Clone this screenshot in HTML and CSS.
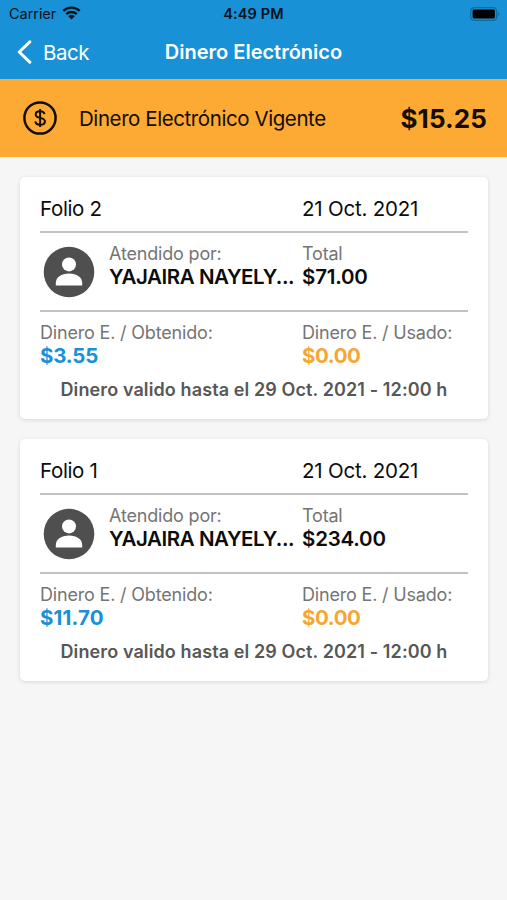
FILE: index.html
```html
<!DOCTYPE html>
<html lang="es">
<head>
<meta charset="utf-8">
<meta name="viewport" content="width=device-width, initial-scale=1">
<title>Dinero Electrónico</title>
<link rel="stylesheet" href="styles.css">
</head>
<body>
<header class="header">
  <div class="status">
    <div class="status-left">
      <span class="carrier">Carrier</span>
      <svg class="wifi" viewBox="0 0 18 13" width="19" height="13.700"><path d="M1.200 4.700a11.200 11.200 0 0 1 15.600 0M4 7.700a7.200 7.200 0 0 1 10 0" fill="none" stroke="#06121a" stroke-width="2.200"/><path d="M9 12.800 5.900 9.700a4.400 4.400 0 0 1 6.200 0z" fill="#06121a"/></svg>
    </div>
    <span class="time">4:49 PM</span>
    <svg class="battery" viewBox="0 0 30 14" width="30" height="14"><rect x=".7" y=".7" width="26" height="12.600" rx="3.600" fill="none" stroke="#126a9b" stroke-width="1.300"/><rect x="2.600" y="2.600" width="22.300" height="8.800" rx="1.400" fill="#000"/><path d="M28.200 5v4.200c1.600-.6 1.600-3.600 0-4.200z" fill="#126a9b"/></svg>
  </div>
  <nav class="nav">
    <a class="back">
      <svg viewBox="0 0 16 24" width="16" height="24"><path d="M13.800 1.800 3.200 12l10.600 10.200" fill="none" stroke="#fff" stroke-width="3" stroke-linecap="round" stroke-linejoin="round"/></svg>
      <span>Back</span>
    </a>
    <h1 class="title">Dinero Electrónico</h1>
  </nav>
</header>
<section class="balance">
  <svg class="coin" viewBox="0 0 34 34" width="34" height="34"><circle cx="17" cy="17" r="15.600" fill="none" stroke="#150d02" stroke-width="2.500"/><path d="M21.500 13.200c-.3-1.800-2-3-4.400-3-2.600 0-4.400 1.300-4.400 3.200 0 4.800 9.200 2.200 9.200 7 0 2-1.900 3.300-4.700 3.300-2.700 0-4.700-1.300-4.900-3.300M17.100 8v18" fill="none" stroke="#150d02" stroke-width="2"/></svg>
  <span class="balance-label">Dinero Electrónico Vigente</span>
  <strong class="balance-amount">$15.25</strong>
</section>
<main class="list">
  <article class="card">
    <div class="row row-head"><span class="folio">Folio 2</span><span class="date">21 Oct. 2021</span></div>
    <div class="row row-person">
      <div class="person">
        <svg class="avatar" viewBox="0 0 52 52" width="52" height="52"><circle cx="26" cy="26" r="25.300" fill="#4f4f4f"/><circle cx="26" cy="18.400" r="7" fill="#fff"/><path d="M12.800 39.400v-2.500c0-5.300 5.500-9.300 13.200-9.300s13.200 4 13.200 9.300v2.500z" fill="#fff"/></svg>
        <div class="field"><span class="label">Atendido por:</span><span class="value name">YAJAIRA NAYELY...</span></div>
      </div>
      <div class="field"><span class="label">Total</span><span class="value">$71.00</span></div>
    </div>
    <div class="row row-money">
      <div class="field"><span class="label">Dinero E. / Obtenido:</span><span class="value blue">$3.55</span></div>
      <div class="field"><span class="label">Dinero E. / Usado:</span><span class="value orange">$0.00</span></div>
    </div>
    <p class="expiry">Dinero valido hasta el 29 Oct. 2021 - 12:00 h</p>
  </article>
  <article class="card">
    <div class="row row-head"><span class="folio">Folio 1</span><span class="date">21 Oct. 2021</span></div>
    <div class="row row-person">
      <div class="person">
        <svg class="avatar" viewBox="0 0 52 52" width="52" height="52"><circle cx="26" cy="26" r="25.300" fill="#4f4f4f"/><circle cx="26" cy="18.400" r="7" fill="#fff"/><path d="M12.800 39.400v-2.500c0-5.300 5.500-9.300 13.200-9.300s13.200 4 13.200 9.300v2.500z" fill="#fff"/></svg>
        <div class="field"><span class="label">Atendido por:</span><span class="value name">YAJAIRA NAYELY...</span></div>
      </div>
      <div class="field"><span class="label">Total</span><span class="value">$234.00</span></div>
    </div>
    <div class="row row-money">
      <div class="field"><span class="label">Dinero E. / Obtenido:</span><span class="value blue wide">$11.70</span></div>
      <div class="field"><span class="label">Dinero E. / Usado:</span><span class="value orange">$0.00</span></div>
    </div>
    <p class="expiry">Dinero valido hasta el 29 Oct. 2021 - 12:00 h</p>
  </article>
</main>
</body>
</html>
```
FILE: styles.css
```css
* { box-sizing: border-box; }
body {
  margin: 0;
  min-height: 900px;
  background: #f6f6f6;
  color: #0c0c0c;
  font-family: Inter, "Liberation Sans", sans-serif;
  white-space: nowrap;
}
.header { height: 79px; background: #1891d6; }
.status {
  display: grid;
  grid-template-columns: 1fr auto 1fr;
  align-items: center;
  height: 27px;
  padding: 0 7px 0 9px;
  color: #06121a;
}
.status-left { display: flex; align-items: center; gap: 6px; }
.carrier { font-size: 14.5px; letter-spacing: -.05px; }
.wifi { margin-top: -1px; }
.time { margin-left: -2px; font-size: 14.5px; font-weight: 600; letter-spacing: .1px; }
.battery { justify-self: end; }
.nav {
  display: grid;
  grid-template-columns: 1fr auto 1fr;
  align-items: center;
  height: 50px;
  padding: 0 16px;
  color: #fff;
}
.back { display: flex; align-items: center; gap: 11px; font-size: 20.5px; letter-spacing: -.5px; }
.title { margin: 0; font-size: 20px; font-weight: 600; }
.balance {
  display: flex;
  align-items: center;
  height: 78px;
  padding: 0 20px 0 23px;
  background: #fcaa34;
  color: #150d02;
}
.balance-label { margin-left: 22px; font-size: 20.5px; letter-spacing: -.42px; }
.balance-amount { margin-left: auto; font-size: 26px; font-weight: 700; letter-spacing: .1px; }
.list { display: grid; gap: 20px; padding: 20px 19px 20px 20px; }
.card {
  height: 242px;
  padding: 0 20px;
  background: #fff;
  border-radius: 5px;
  box-shadow: 0 1px 4px rgba(0, 0, 0, .13);
}
.row { display: grid; grid-template-columns: 262px 1fr; }
.row-head {
  height: 56px;
  padding-top: 19px;
  border-bottom: 2px solid #c2c2c2;
  font-size: 20.5px;
  line-height: 25px;
}
.folio { letter-spacing: -.35px; }
.date { letter-spacing: -.2px; }
.row-person { height: 79px; padding-top: 9px; border-bottom: 2px solid #c2c2c2; }
.row-money { height: 66px; padding-top: 9px; }
.person { display: flex; gap: 14px; padding-left: 3px; }
.avatar { margin-top: 3.5px; }
.field { display: flex; flex-direction: column; }
.label { height: 23px; color: #757575; font-size: 18px; line-height: 23px; letter-spacing: -.18px; }
.value { height: 24px; font-size: 20.5px; font-weight: 600; line-height: 24px; letter-spacing: -.2px; }
.name { letter-spacing: -.45px; }
.blue { color: #1891d6; font-weight: 700; }
.wide { letter-spacing: .15px; }
.orange { color: #f5a733; font-weight: 700; letter-spacing: -.4px; }
.expiry {
  margin: 0;
  text-align: center;
  color: #575757;
  font-size: 18px;
  font-weight: 600;
  line-height: 24px;
  letter-spacing: .11px;
}
```
